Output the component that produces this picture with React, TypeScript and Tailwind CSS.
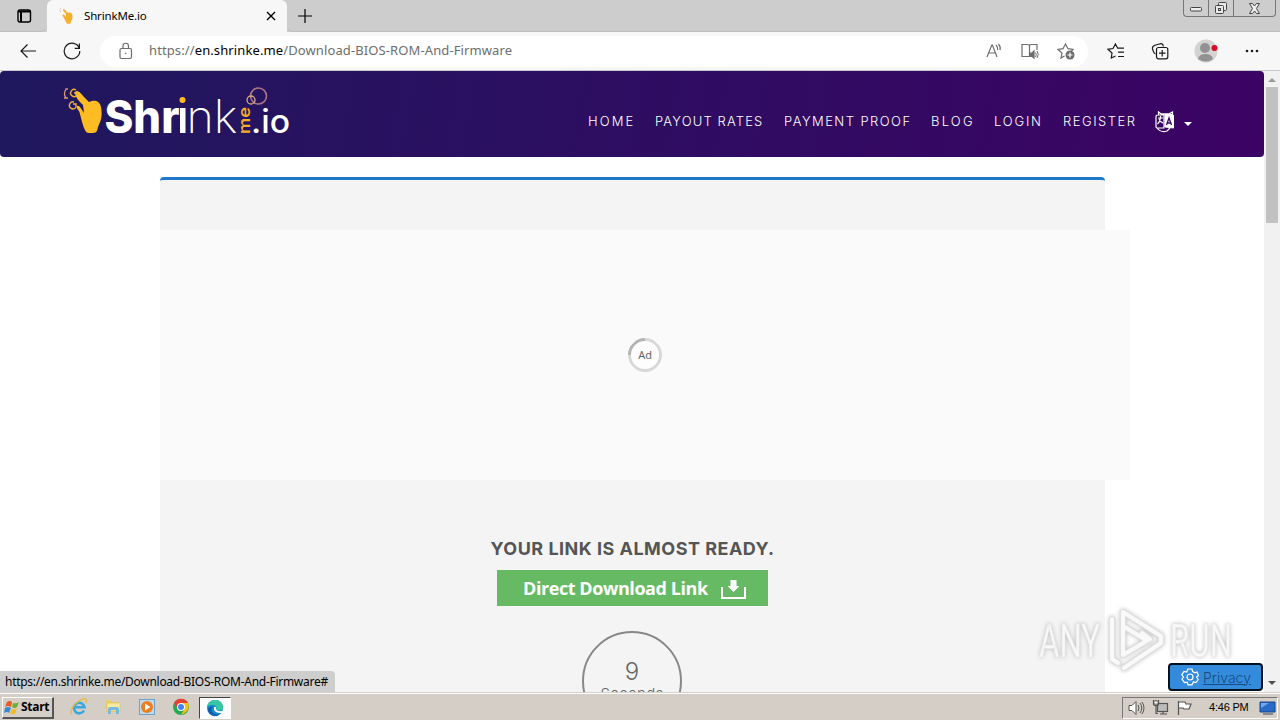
import { ReactNode } from 'react';

const navLinks = [
  { label: 'HOME', width: 'w-[47px]', tracking: 'tracking-[2.1px]' },
  { label: 'PAYOUT RATES', width: 'w-[109px]', tracking: 'tracking-[1.15px]' },
  { label: 'PAYMENT PROOF', width: 'w-[127px]', tracking: 'tracking-[1.45px]' },
  { label: 'BLOG', width: 'w-[43px]', tracking: 'tracking-[2.2px]' },
  { label: 'LOGIN', width: 'w-[49px]', tracking: 'tracking-[1.8px]' },
  { label: 'REGISTER', width: 'w-[73px]', tracking: 'tracking-[1.5px]' },
];

type IconProps = { size?: number; className?: string; children: ReactNode };

const Icon = ({ size = 18, className = '', children }: IconProps) => (
  <svg
    width={size}
    height={size}
    viewBox={`0 0 ${size} ${size}`}
    fill="none"
    stroke="currentColor"
    strokeWidth="1.2"
    className={`flex-none ${className}`}
  >
    {children}
  </svg>
);

const Hand = ({ size, className = '' }: { size: number; className?: string }) => (
  <svg width={size} height={size} viewBox="0 0 46 48" className={`flex-none ${className}`}>
    <path
      d="M11 5C14 2 18 7 22 11L27 15C33 12 37 15 39 20C41 31 38 35 35 41L34 45Q33 47 30 47H24Q22 47 21 44C17 37 14 29 10 24C8 20 11 18 14 20L19 26L20 18C17 15 15 11 11 8Z"
      fill="#f5b02c"
    />
    <path d="M4 2C0 4 1 9 4 11M2 2H5M2 12L5 10" fill="none" stroke="#d5a36d" strokeWidth="1.2" />
  </svg>
);

const TabStrip = () => (
  <div className="flex h-8 flex-none bg-[#cdcdcd]">
    <div className="flex w-[47px] items-center justify-center rounded-br-md border-b border-[#bdbdbd]">
      <Icon size={16} className="text-black">
        <rect x="2" y="2" width="12.5" height="12" rx="2" strokeWidth="1.4" />
        <path d="M2 3.5H14.5M5 4V14" strokeWidth="2" />
      </Icon>
    </div>
    <div className="flex w-[240px] items-center rounded-t-md bg-[#f7f7f7] pl-3 pr-[9px]">
      <Hand size={16} />
      <span className="ml-[9px] flex-1 text-[11.5px] tracking-[-0.15px] text-black">ShrinkMe.io</span>
      <Icon size={14} className="text-black">
        <path d="M3 3L11 11M11 3L3 11" strokeWidth="1.4" />
      </Icon>
    </div>
    <div className="flex w-9 items-center justify-center rounded-bl-md border-b border-[#bdbdbd]">
      <Icon size={16} className="text-black">
        <path d="M8 1V15M1 8H15" />
      </Icon>
    </div>
    <div className="flex flex-1 items-start justify-end border-b border-[#bdbdbd] pr-1">
      <div className="flex h-[17px] w-[93px] rounded-b border border-t-0 border-[#777] text-[#444]">
        <div className="flex w-[25px] items-end justify-center border-r border-[#777] pb-1">
          <svg width="12" height="5" fill="#eee" stroke="currentColor"><rect x=".5" y=".5" width="11" height="3.5" rx="1" /></svg>
        </div>
        <div className="flex w-[25px] items-center justify-center border-r border-[#777]">
          <svg width="14" height="14" fill="#e8e8e8" stroke="currentColor">
            <rect x="4.5" y="1.5" width="8" height="8" rx="1" />
            <rect x="1.5" y="4.5" width="8" height="8" rx="1" />
            <rect x="4.5" y="7.5" width="2" height="2" />
          </svg>
        </div>
        <div className="flex flex-1 items-center justify-center">
          <svg width="13" height="11" fill="#eee" stroke="currentColor">
            <path d="M1.5 .5H4.5L6.5 3L8.5 .5H11.5L8.5 5.5L11.5 10.5H8.5L6.5 8L4.5 10.5H1.5L4.5 5.5Z" />
          </svg>
        </div>
      </div>
    </div>
  </div>
);

const Toolbar = () => (
  <div className="flex h-[39px] flex-none items-center border-b border-[#c9c9d0] bg-[#f7f7f7] text-[#1a1a1a]">
    <Icon className="ml-[19px]">
      <path d="M17 9H2M8.5 2.5L2 9L8.5 15.5" />
    </Icon>
    <Icon className="ml-[26px]">
      <path d="M16.3 6.2A7.8 7.8 0 1 0 16.8 9M16.4 1.5V6.3H11.7" />
    </Icon>
    <div className="ml-[19px] flex h-[31px] w-[988px] items-center rounded-full bg-white pl-[17px] pr-[13px] text-[#6d6d6d]">
      <Icon>
        <rect x="3" y="6.5" width="11.5" height="10" rx="1.5" />
        <path d="M6 6V4A2.7 2.7 0 0 1 11.5 4V6" />
        <circle cx="8.8" cy="11.5" r=".8" fill="currentColor" stroke="none" />
      </Icon>
      <span className="ml-[14px] flex-1 whitespace-nowrap text-[13px] tracking-[0.11px]">
        https://<span className="text-black">en.shrinke.me</span>/Download-BIOS-ROM-And-Firmware
      </span>
      <Icon>
        <path d="M2 15L6.8 3H7.4L12 15M4 11H10M11 3Q13 5 12.5 8M13.5 2Q16 5 15 8" />
      </Icon>
      <Icon className="ml-[18px]">
        <path d="M8.5 14.5H1V2.5H6.5Q8.5 2.5 8.5 4V14.5M8.5 4Q8.5 2.5 10.5 2.5H16V8" />
        <path d="M9 11H11L13 9V16L11 14.5H9Z" fill="currentColor" />
        <path d="M14.5 10.5Q16 12.5 14.5 15M16 9Q18.5 12.5 16 16" strokeWidth="1" />
      </Icon>
      <Icon className="ml-[18px]">
        <path d="M7.5 14L4 16L5 11L1 7.5L6 6.7L8.5 2L11 6.7L16 7.5L14.5 9" />
        <circle cx="13" cy="13" r="4.5" fill="#6d6d6d" stroke="none" />
        <path d="M13 10.5V15.5M10.5 13H15.5" stroke="#fff" />
      </Icon>
    </div>
    <Icon className="ml-[19px]">
      <path d="M8.5 14L4.3 16L5 11L1 7.3L6 6.5L8.4 2L10.7 6.2L17 6.2M11 10.2H17M11 14.5H17" />
    </Icon>
    <Icon className="ml-[26px]">
      <path d="M4.5 12C2 11 2.5 9 1.5 7C1 5 2 4 4 3.3L9 1.8C11 1.3 12 2 12.3 4.5" />
      <rect x="5.5" y="5.5" width="11.3" height="11.3" rx="2" />
      <path d="M11.2 8V14.5M8 11.2H14.5" />
    </Icon>
    <svg width="24" height="24" viewBox="0 0 24 24" className="ml-[25px] flex-none">
      <circle cx="12" cy="12" r="11.5" fill="#d5d3d1" />
      <circle cx="11" cy="9" r="5" fill="#929292" />
      <path d="M4 20Q5 15 11.5 15T19 20Q12 25 4 20" fill="#929292" />
      <circle cx="20.5" cy="9" r="3" fill="#d90b20" />
    </svg>
    <svg width="16" height="4" className="ml-[26px] flex-none" fill="currentColor">
      <circle cx="3" cy="2" r="1.3" />
      <circle cx="8" cy="2" r="1.3" />
      <circle cx="13" cy="2" r="1.3" />
    </svg>
  </div>
);

const Logo = () => (
  <div className="flex h-[54px] w-[230px] flex-none">
    <svg width="230" height="54" viewBox="0 0 230 54" className="overflow-visible font-['Inter',sans-serif]">
      <path d="M12 5C15 2 18 7 22 11L26 15C33 12 37 15 38 20C40 31 37 35 35 40L34 44Q33 46 30 46H26Q23 46 22 43C19 37 18 29 16 24C12 20 14 17 17 20L21 26L20 18C16 14 12 10 12 5Z" fill="#fdbc24" />
      <path d="M13 3A3.5 3.5 0 1 0 14 8V6H11M11 15A3.5 3.5 0 1 0 13 20V17H10" fill="none" stroke="#efb135" strokeWidth="1.4" />
      <path d="M5 2H3Q0 7 3 11M1 11H5" fill="none" stroke="#d69b76" strokeWidth="1.3" />
      <text x="41.5" y="46" fontSize="45" fontWeight="800" fill="#fff" textLength="75" lengthAdjust="spacingAndGlyphs">Shr</text>
      <rect x="117" y="21" width="5.5" height="25" fill="#fff" />
      <circle cx="119.5" cy="13" r="3" fill="#fdbc24" />
      <text x="123.5" y="46" fontSize="46" fontWeight="200" fill="#fff" textLength="51" lengthAdjust="spacingAndGlyphs">nk</text>
      <text transform="translate(187 47) rotate(-90)" fontSize="16" fontWeight="600" fill="#f4ad2b" textLength="27" lengthAdjust="spacingAndGlyphs">me</text>
      <text x="188" y="46" fontSize="32" fontWeight="500" fill="#fff" textLength="39" lengthAdjust="spacingAndGlyphs">.io</text>
      <circle cx="195.5" cy="9" r="8" fill="none" stroke="#ad7382" strokeWidth="1.6" />
      <circle cx="188" cy="13" r="4" fill="none" stroke="#d4ad83" strokeWidth="1.3" />
    </svg>
  </div>
);

const Navbar = () => (
  <nav className="flex h-[86px] flex-none items-start rounded bg-[linear-gradient(100deg,#1f185e,#3c0364)] pl-[63px] pt-4 text-white">
    <Logo />
    <ul className="ml-[295px] mt-[24px] flex gap-5 font-['Inter',sans-serif] text-[13px] font-light leading-5">
      {navLinks.map((link) => (
        <li key={link.label} className={`whitespace-nowrap ${link.width} ${link.tracking}`}>
          {link.label}
        </li>
      ))}
    </ul>
    <svg width="20" height="24" viewBox="0 0 20 24" className="ml-[19px] mt-[23px] flex-none" fill="none" stroke="#fff">
      <path d="M3.5 5V2L6 3.8H14L17.5 2V6M3 5H9V18H2Q1 18 1 16V7Q1 5 3 5M2 18Q6 23 12 21L15 18M3 8H8M5.5 6V8Q5 12 2.5 14M4 9Q5 12 8 13" strokeWidth="1.2" />
      <path d="M10 4.5H17Q18.5 4.5 18.5 6V18L10 17Z" fill="#fff" />
      <path d="M11.5 15L14 8L16.5 15M12.5 13H15.5" stroke="#35065f" strokeWidth="1.3" />
    </svg>
    <svg width="8" height="4" className="ml-[9px] mt-[35px] flex-none" fill="#fff">
      <path d="M0 0H8L4 4Z" />
    </svg>
  </nav>
);

const LinkCard = () => (
  <main className="ml-[160px] mt-5 flex h-[560px] w-[945px] flex-none flex-col items-center rounded-t border-t-[3px] border-[#1f78cb] bg-[#f4f4f4] pt-[50px]">
    <div className="flex h-[250px] w-[970px] flex-none items-center justify-center self-start bg-[#fafafa]">
      <div className="flex size-[34px] items-center justify-center rounded-full border-[3px] border-[#d8d8d8] border-t-[#b4b4b4] bg-[#fdfdfd] text-[11px] text-[#666] -rotate-45">
        <span className="rotate-45">Ad</span>
      </div>
    </div>
    <h1 className="mt-[55px] whitespace-nowrap font-['Inter',sans-serif] text-[18px] font-bold leading-7 tracking-[0.48px] text-[#555]">
      YOUR LINK IS ALMOST READY.
    </h1>
    <button className="mt-[7px] flex h-9 w-[271px] flex-none items-center bg-[#66ba64] pl-[26px] text-white">
      <span className="w-[198px] whitespace-nowrap text-left font-['Open_Sans',sans-serif] text-[18px] font-bold tracking-[-0.43px]">
        Direct Download Link
      </span>
      <svg width="26" height="20" className="mt-[3px]" fill="none" stroke="#fff" strokeWidth="2">
        <path d="M1 7V18H24V7" />
        <path d="M9.5 0H15.5V6H18.5L12.5 12L6.5 6H9.5Z" fill="#fff" stroke="none" />
      </svg>
    </button>
    <div className="-ml-px mt-[25px] flex size-[100px] flex-none flex-col items-center rounded-full border-2 border-[#888] pt-[23px] font-['Inter',sans-serif] font-light text-[#666]">
      <span className="text-[24px] leading-8">9</span>
      <span className="-mt-[2px] text-[15px] leading-4 tracking-[0.3px]">Seconds</span>
    </div>
  </main>
);

const Watermark = () => (
  <svg width="204" height="68" viewBox="0 0 204 68" className="absolute left-[1034px] top-[536px] overflow-visible font-['Roboto',sans-serif] drop-shadow-[0_0_2px_#bbb]">
    <g fill="#f8f8f8" fontSize="46" fontWeight="400" stroke="#e8e8e8" strokeWidth=".6">
      <text x="5" y="50" textLength="61" lengthAdjust="spacingAndGlyphs">ANY</text>
      <text x="136" y="50" textLength="62" lengthAdjust="spacingAndGlyphs">RUN</text>
    </g>
    <g fill="none" stroke="#e0e0e0" strokeWidth="6" strokeLinejoin="round" strokeLinecap="round">
      <path d="M78 12V52L84 56M89 5V48L116 32L108 26M89 5L127 29V36L90 61M89 19L112 33" />
    </g>
    <g fill="none" stroke="#f9f9f9" strokeWidth="4" strokeLinejoin="round" strokeLinecap="round">
      <path d="M78 12V52L84 56M89 5V48L116 32L108 26M89 5L127 29V36L90 61M89 19L112 33" />
    </g>
  </svg>
);

const Scrollbar = () => (
  <div className="flex w-4 flex-none flex-col items-center bg-[#f1f1f1]">
    <svg width="8" height="4" className="mt-[7px]" fill="#9a9a9a"><path d="M0 4L4 0L8 4Z" /></svg>
    <div className="mt-[5px] h-[136px] w-3 bg-[#c1c1c1]" />
    <svg width="8" height="4" className="mb-[7px] mt-auto" fill="#505050"><path d="M0 0H8L4 4Z" /></svg>
  </div>
);

const Taskbar = () => (
  <footer className="flex h-7 flex-none items-center border-t border-[#d4d0c8] bg-[#d4cec6] shadow-[inset_0_1px_0_#fff]">
    <button className="ml-[2px] mt-0.5 flex h-[22px] w-[52px] items-center border border-b-2 border-r-2 border-[#fff] border-b-[#555] border-r-[#555] pl-px font-['Open_Sans',sans-serif] text-[12px] font-bold tracking-[-0.3px] text-black">
      <svg width="17" height="17" viewBox="0 0 17 17" className="flex-none">
        <path d="M3 3Q6 1 8 3L7 8Q4 6 1 8Z" fill="#e65c25" />
        <path d="M9 4Q12 5 15 3L13 8Q11 10 8 8Z" fill="#72ae35" />
        <path d="M1 9Q4 7 7 9L5 14Q3 12 0 14Z" fill="#358ad2" />
        <path d="M8 10Q10 11 13 9L11 15Q8 16 6 14Z" fill="#f2bb25" />
      </svg>
      Start
    </button>
    {/* Internet Explorer */}
    <svg width="18" height="18" viewBox="0 0 18 18" className="ml-4 flex-none" fill="none">
      <path d="M14 12.5A5.3 5.3 0 1 1 14.5 9.2H5" stroke="#38a8df" strokeWidth="2.6" />
      <path d="M2 16C-1 14 3 7 9 3C14 0 18 0 16 5" stroke="#e8b93c" strokeWidth="1.3" />
    </svg>
    {/* Explorer */}
    <svg width="18" height="18" viewBox="0 0 18 18" className="ml-4 flex-none">
      <path d="M2 2H7L8 4H15V14H2Z" fill="#e9cc6b" />
      <path d="M3 5H16V13H3Z" fill="#f9e99f" stroke="#d7b65a" strokeWidth=".5" />
      <path d="M4 16V11Q4 9 6 9H13Q15 9 15 11V16H12V12H7V16Z" fill="#75bbdf" />
    </svg>
    {/* Media Player */}
    <svg width="18" height="18" viewBox="0 0 18 18" className="ml-4 flex-none">
      <rect x="1.5" y="1.5" width="15" height="15" fill="#bfdcef" stroke="#6aa1cf" />
      <circle cx="9" cy="9" r="6" fill="#ee7d1c" />
      <path d="M7 5.5L12.5 9L7 12.5Z" fill="#fff" />
    </svg>
    {/* Chrome */}
    <svg width="18" height="18" viewBox="0 0 18 18" className="ml-4 flex-none">
      <circle cx="9" cy="9" r="8" fill="#27a852" />
      <path d="M2 5A8 8 0 0 1 16 5H9L6 11Z" fill="#e54235" />
      <path d="M9 5H16Q19 13 9 17L12.5 11Z" fill="#fbc116" />
      <circle cx="9" cy="9" r="4" fill="#fff" />
      <circle cx="9" cy="9" r="3" fill="#4285f4" />
    </svg>
    <div className="ml-[9px] mt-0.5 flex h-[22px] w-8 items-center justify-center border border-[#fff] border-l-[#444] border-t-[#444] bg-[#fcfcfc]">
      <svg width="18" height="18" viewBox="0 0 18 18">
        <circle cx="9" cy="9" r="8" fill="#128bd2" />
        <path d="M1 8C2 0 15-2 17 7C18 11 13 13 10 11C12 8 9 5 5 6Q2 6 1 8" fill="#37c8a3" />
        <path d="M7 8C3 12 8 17 14 15Q8 20 3 14C0 9 4 7 7 8" fill="#125da8" />
        <path d="M10 8Q9 13 16 12L17 13L15 14Q7 14 8 8Z" fill="#fff" />
      </svg>
    </div>
    <div className="ml-auto mr-0.5 mt-0.5 flex h-[22px] w-[156px] items-center border border-white border-l-[#777] border-t-[#777] pl-[5px] text-[#555]">
      <Icon>
        <path d="M1 6.5H4L8 2.5V15.5L4 11.5H1Z" fill="#fff" strokeWidth="1" />
        <path d="M10 6Q12 9 10 12M12 4Q15.5 9 12 14M14 3Q18 9 14 15" strokeWidth="1" />
      </Icon>
      <Icon className="ml-[6px]">
        <rect x="5.5" y="4.5" width="10" height="8" fill="#bbb" />
        <path d="M1.5 1V5Q1.5 6.5 4 6.5T6.5 5V1M4 1V5M4 6V14.5H6M8 15H15M11 13V15" />
        <path d="M2 2H6V5H2Z" fill="#fff" strokeWidth=".8" />
      </Icon>
      <Icon className="ml-[6px]">
        <path d="M2.5 2V16M3 3H9L10 5H15L13 10H8L7 9H3" fill="#fff" />
      </Icon>
      <span className="ml-[15px] w-[41px] whitespace-nowrap font-['Liberation_Sans',sans-serif] text-[11px] tracking-[-0.2px] text-black">4:46 PM</span>
      <svg width="17" height="16" viewBox="0 0 17 16" className="ml-[9px] flex-none">
        <path d="M1 2L16 2V12H1Z" fill="#286bc8" stroke="#174788" />
        <path d="M2 3H10L2 8Z" fill="#70a9e4" />
        <path d="M4 13H14V15H4Z" fill="#888" />
      </svg>
    </div>
  </footer>
);

export default function App() {
  return (
    <div className="flex h-screen w-screen flex-col overflow-hidden bg-white font-['Noto_Sans',sans-serif]">
      <TabStrip />
      <Toolbar />
      <div className="relative flex h-[621px] flex-none overflow-hidden">
        <div className="flex w-[1264px] flex-none flex-col overflow-hidden">
          <Navbar />
          <LinkCard />
        </div>
        <Scrollbar />
        <Watermark />
        <div className="absolute bottom-0 left-0 h-[21px] w-[335px] whitespace-nowrap rounded-tr bg-[#cecece] pl-[5px] text-[12px] leading-[22px] tracking-[-0.28px] text-black">
          https://en.shrinke.me/Download-BIOS-ROM-And-Firmware#
        </div>
        <button className="absolute bottom-[1px] left-[1168px] flex h-7 w-[95px] items-center rounded border-2 border-[#001122] bg-[#348bdc] pl-[11px] text-[#174b83]">
          <svg width="18" height="18" viewBox="0 0 18 18" fill="none" stroke="#fff" strokeWidth="1.2">
            <path d="M7 1H11L11.6 3.5L14 4.8L16 4L17.5 7.5L15.6 9.2L17.2 11.5L15 14.5L12.5 13.8L11 16.8H7L6.2 14.2L3.5 14.5L1 11L2.5 9L.8 6.8L3 3.5L5.7 4Z" />
            <circle cx="9" cy="9" r="3" />
          </svg>
          <span className="ml-1 font-['Inter',sans-serif] text-[14px] font-light underline">Privacy</span>
        </button>
      </div>
      <Taskbar />
    </div>
  );
}
